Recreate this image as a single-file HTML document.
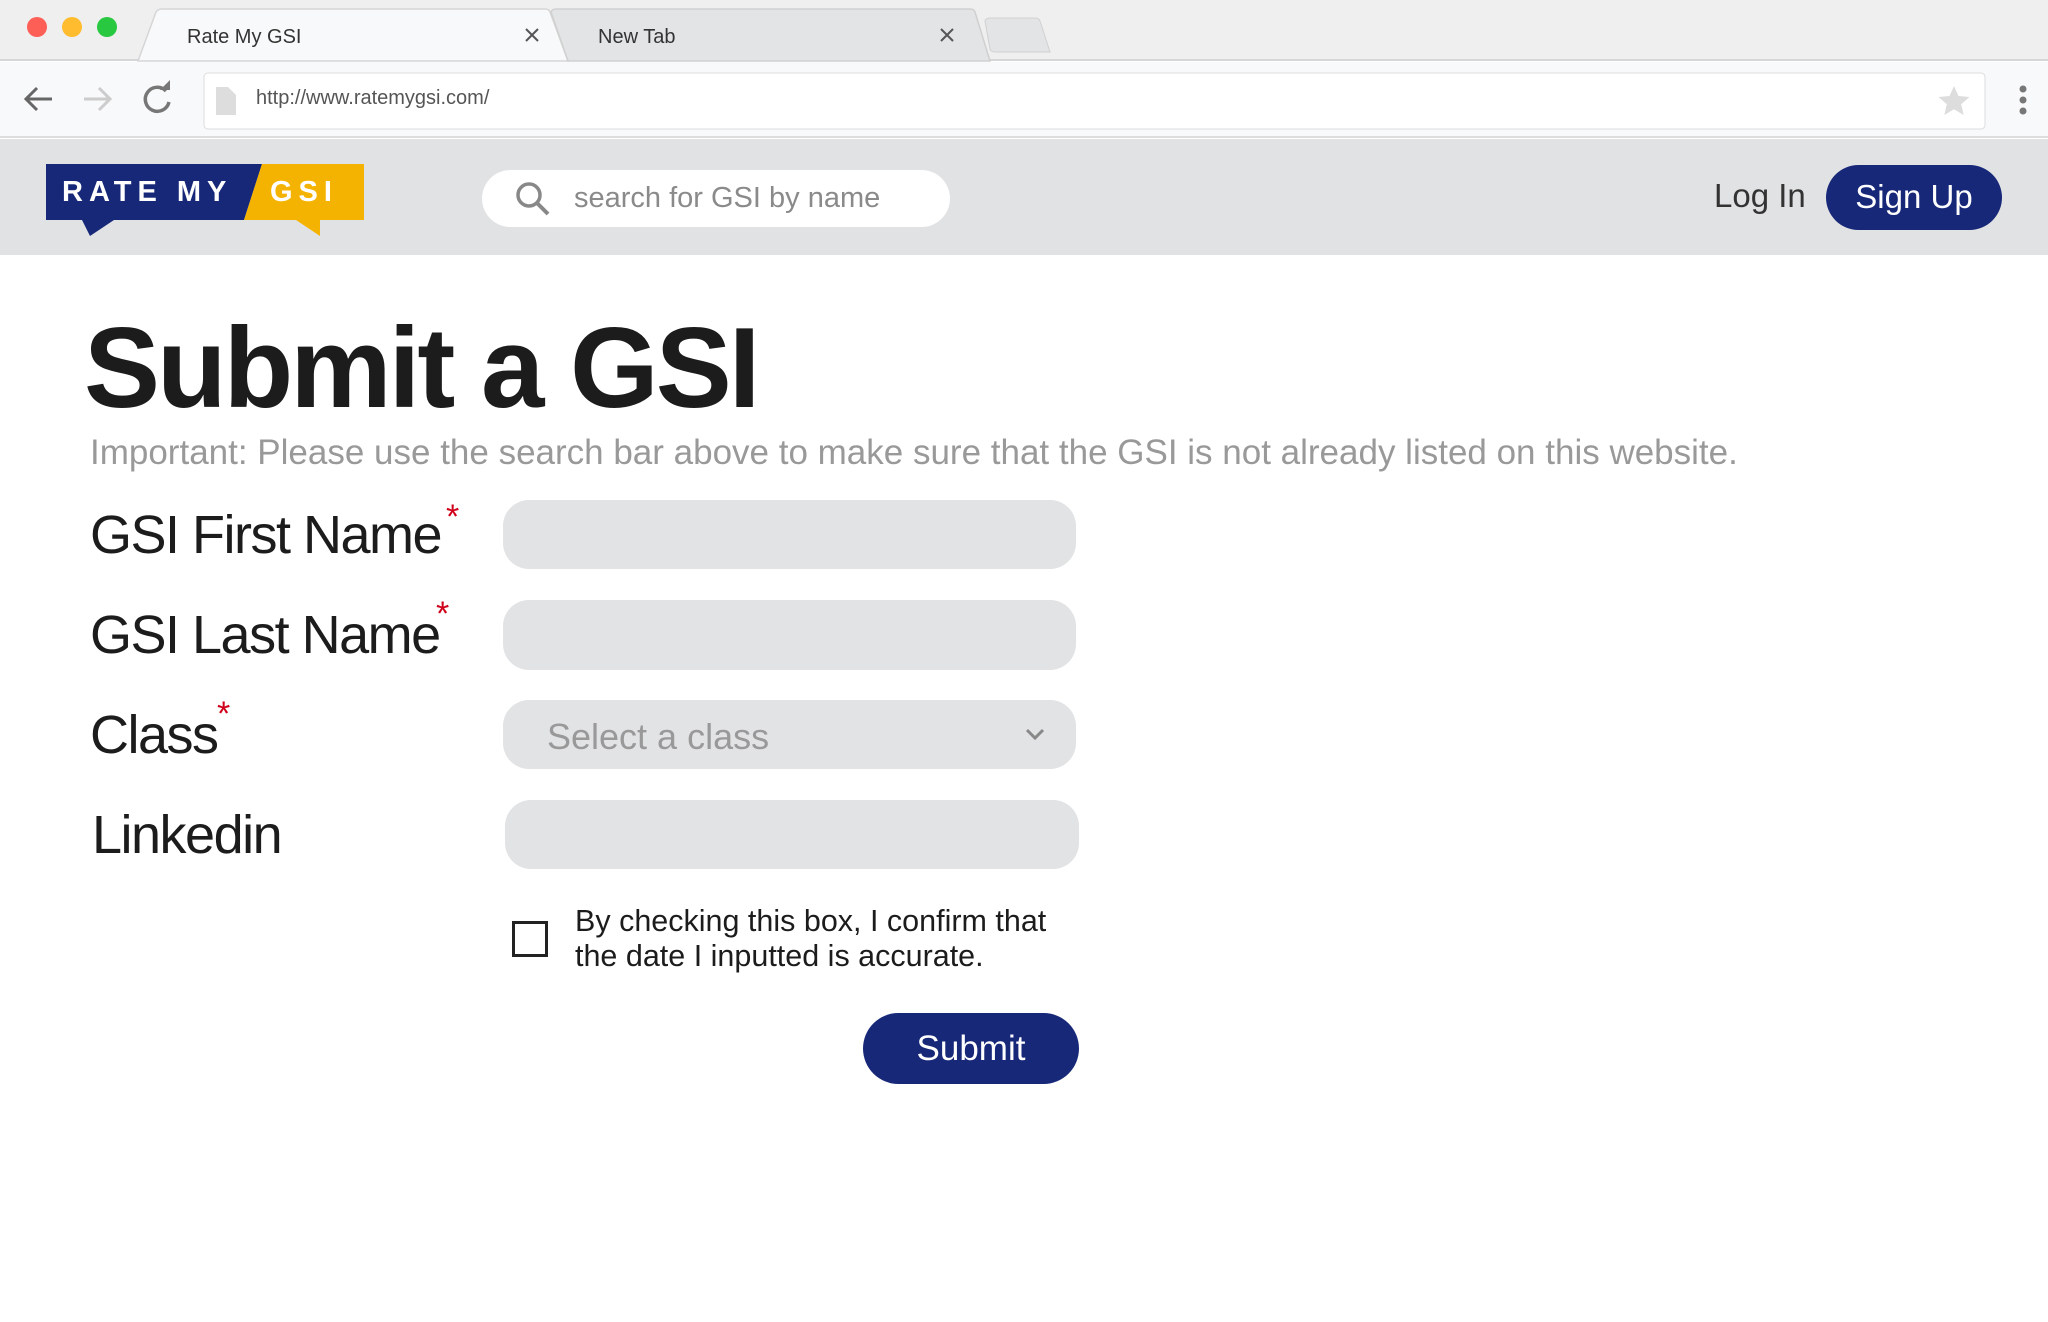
<!DOCTYPE html>
<html><head><meta charset="utf-8"><style>
*{margin:0;padding:0;box-sizing:border-box}
body{width:2048px;height:1322px;background:#fff;font-family:"Liberation Sans",sans-serif;position:relative;overflow:hidden}
.a{position:absolute;white-space:nowrap}
.inp{position:absolute;background:#e2e3e5;border-radius:26px}
.lbl{position:absolute;font-size:54px;color:#1c1c1c;letter-spacing:-1.5px;line-height:1}
.ast{position:absolute;color:#d0021b;font-size:34px;line-height:1}
</style></head><body>
<div class="a" style="left:0;top:0;width:2048px;height:61px;background:#efefef;border-bottom:2px solid #d6d6d6"></div>
<div class="a" style="left:27px;top:17px;width:20px;height:20px;border-radius:50%;background:#fd5f57"></div>
<div class="a" style="left:62px;top:17px;width:20px;height:20px;border-radius:50%;background:#febc2e"></div>
<div class="a" style="left:97px;top:17px;width:20px;height:20px;border-radius:50%;background:#28c840"></div>
<svg class="a" style="left:0;top:0" width="2048" height="62">
<path d="M138 61 L156 12 Q158 9 162 9 L545 9 Q549 9 550 12 L568 61 Z" fill="#f8f9fa" stroke="#d6d6d6" stroke-width="1.5"/>
<path d="M568 61 L551 12 Q552 9 556 9 L970 9 Q974 9 975 12 L990 61 Z" fill="#e3e4e6" stroke="#d0d0d0" stroke-width="1.5"/>
<path d="M985 21 Q986 18 990 18 L1035 18 Q1039 18 1040 21 L1050 52 L995 52 Q991 52 990 49 Z" fill="#e3e4e6" stroke="#d0d0d0"/>
<path d="M526 29 l12 12 M538 29 l-12 12 M941 29 l12 12 M953 29 l-12 12" stroke="#555" stroke-width="2"/>
</svg>
<div class="a" style="left:187px;top:26px;font-size:20px;color:#333">Rate My GSI</div>
<div class="a" style="left:598px;top:26px;font-size:20px;color:#333">New Tab</div>
<div class="a" style="left:0;top:62px;width:2048px;height:76px;background:#f8f9fa;border-bottom:2px solid #ddd"></div>
<svg class="a" style="left:0;top:62px" width="2048" height="76">
<path d="M52 37 H26 M37 26 L26 37 L37 48" stroke="#666" stroke-width="3" fill="none"/>
<path d="M84 37 H110 M99 26 L110 37 L99 48" stroke="#ccc" stroke-width="3" fill="none"/>
<path d="M166 29 A12 12 0 1 0 169 40" stroke="#777" stroke-width="3.5" fill="none"/>
<path d="M160 28 L170 28 L170 18 Z" fill="#777"/>
<rect x="204" y="11" width="1781" height="56" rx="4" fill="#fff" stroke="#ddd"/>
<path d="M216 25 h12 l8 8 v20 h-20 Z" fill="#ddd"/>
<path d="M1954 24 l4.5 10 11 1 -8.3 7.3 2.5 10.7 -9.7 -5.7 -9.7 5.7 2.5 -10.7 -8.3 -7.3 11 -1 Z" fill="#ddd"/>
<circle cx="2023" cy="27" r="3.5" fill="#777"/><circle cx="2023" cy="38" r="3.5" fill="#777"/><circle cx="2023" cy="49" r="3.5" fill="#777"/>
</svg>
<div class="a" style="left:256px;top:87px;font-size:20px;color:#555">http://www.ratemygsi.com/</div>
<div class="a" style="left:0;top:139px;width:2048px;height:116px;background:#e1e2e4"></div>
<svg class="a" style="left:46px;top:164px" width="320" height="72">
<path d="M0 0 H216 L198 56 H0 Z" fill="#172878"/>
<path d="M216 0 H318 V56 H198 Z" fill="#f5b301"/>
<path d="M36 56 L44 72 L68 56 Z" fill="#172878"/>
<path d="M250 56 L274 72 L274 56 Z" fill="#f5b301"/>
</svg>
<div class="a" style="left:62px;top:176px;font-size:29px;font-weight:bold;color:#fff;letter-spacing:6px">RATE MY</div>
<div class="a" style="left:270px;top:176px;font-size:29px;font-weight:bold;color:#fff;letter-spacing:6px">GSI</div>
<div class="a" style="left:482px;top:170px;width:468px;height:57px;background:#fff;border-radius:29px"></div>
<svg class="a" style="left:514px;top:180px" width="40" height="40"><circle cx="15" cy="15" r="11" stroke="#888" stroke-width="3.5" fill="none"/><path d="M23 23 L34 34" stroke="#888" stroke-width="4"/></svg>
<div class="a" style="left:574px;top:182px;font-size:29px;color:#8a8a8a">search for GSI by name</div>
<div class="a" style="left:1714px;top:177px;font-size:33px;color:#333">Log In</div>
<div class="a" style="left:1826px;top:165px;width:176px;height:65px;background:#172878;border-radius:33px;color:#fff;font-size:33px;text-align:center;line-height:63px">Sign Up</div>
<div class="a" style="left:84px;top:306px;font-size:114px;font-weight:bold;color:#1c1c1c;letter-spacing:-3px;line-height:1.1">Submit a GSI</div>
<div class="a" style="left:90px;top:433px;font-size:35px;color:#999">Important: Please use the search bar above to make sure that the GSI is not already listed on this website.</div>
<div class="lbl" style="left:90px;top:508px">GSI First Name</div>
<div class="ast" style="left:446px;top:500px">*</div>
<div class="lbl" style="left:90px;top:608px">GSI Last Name</div>
<div class="ast" style="left:436px;top:597px">*</div>
<div class="lbl" style="left:90px;top:708px">Class</div>
<div class="ast" style="left:217px;top:697px">*</div>
<div class="lbl" style="left:92px;top:808px">Linkedin</div>
<div class="inp" style="left:503px;top:500px;width:573px;height:69px"></div>
<div class="inp" style="left:503px;top:600px;width:573px;height:70px"></div>
<div class="inp" style="left:503px;top:700px;width:573px;height:69px"></div>
<div class="a" style="left:547px;top:716px;font-size:36px;color:#999">Select a class</div>
<svg class="a" style="left:1024px;top:726px" width="22" height="16"><path d="M3 4 L11 12 L19 4" stroke="#888" stroke-width="3" fill="none"/></svg>
<div class="inp" style="left:505px;top:800px;width:574px;height:69px"></div>
<div class="a" style="left:512px;top:921px;width:36px;height:36px;border:3px solid #222"></div>
<div class="a" style="left:575px;top:904px;font-size:30.5px;color:#1c1c1c;line-height:35px">By checking this box, I confirm that<br>the date I inputted is accurate.</div>
<div class="a" style="left:863px;top:1013px;width:216px;height:71px;background:#172878;border-radius:36px;color:#fff;font-size:35px;text-align:center;line-height:71px">Submit</div>
</body></html>
